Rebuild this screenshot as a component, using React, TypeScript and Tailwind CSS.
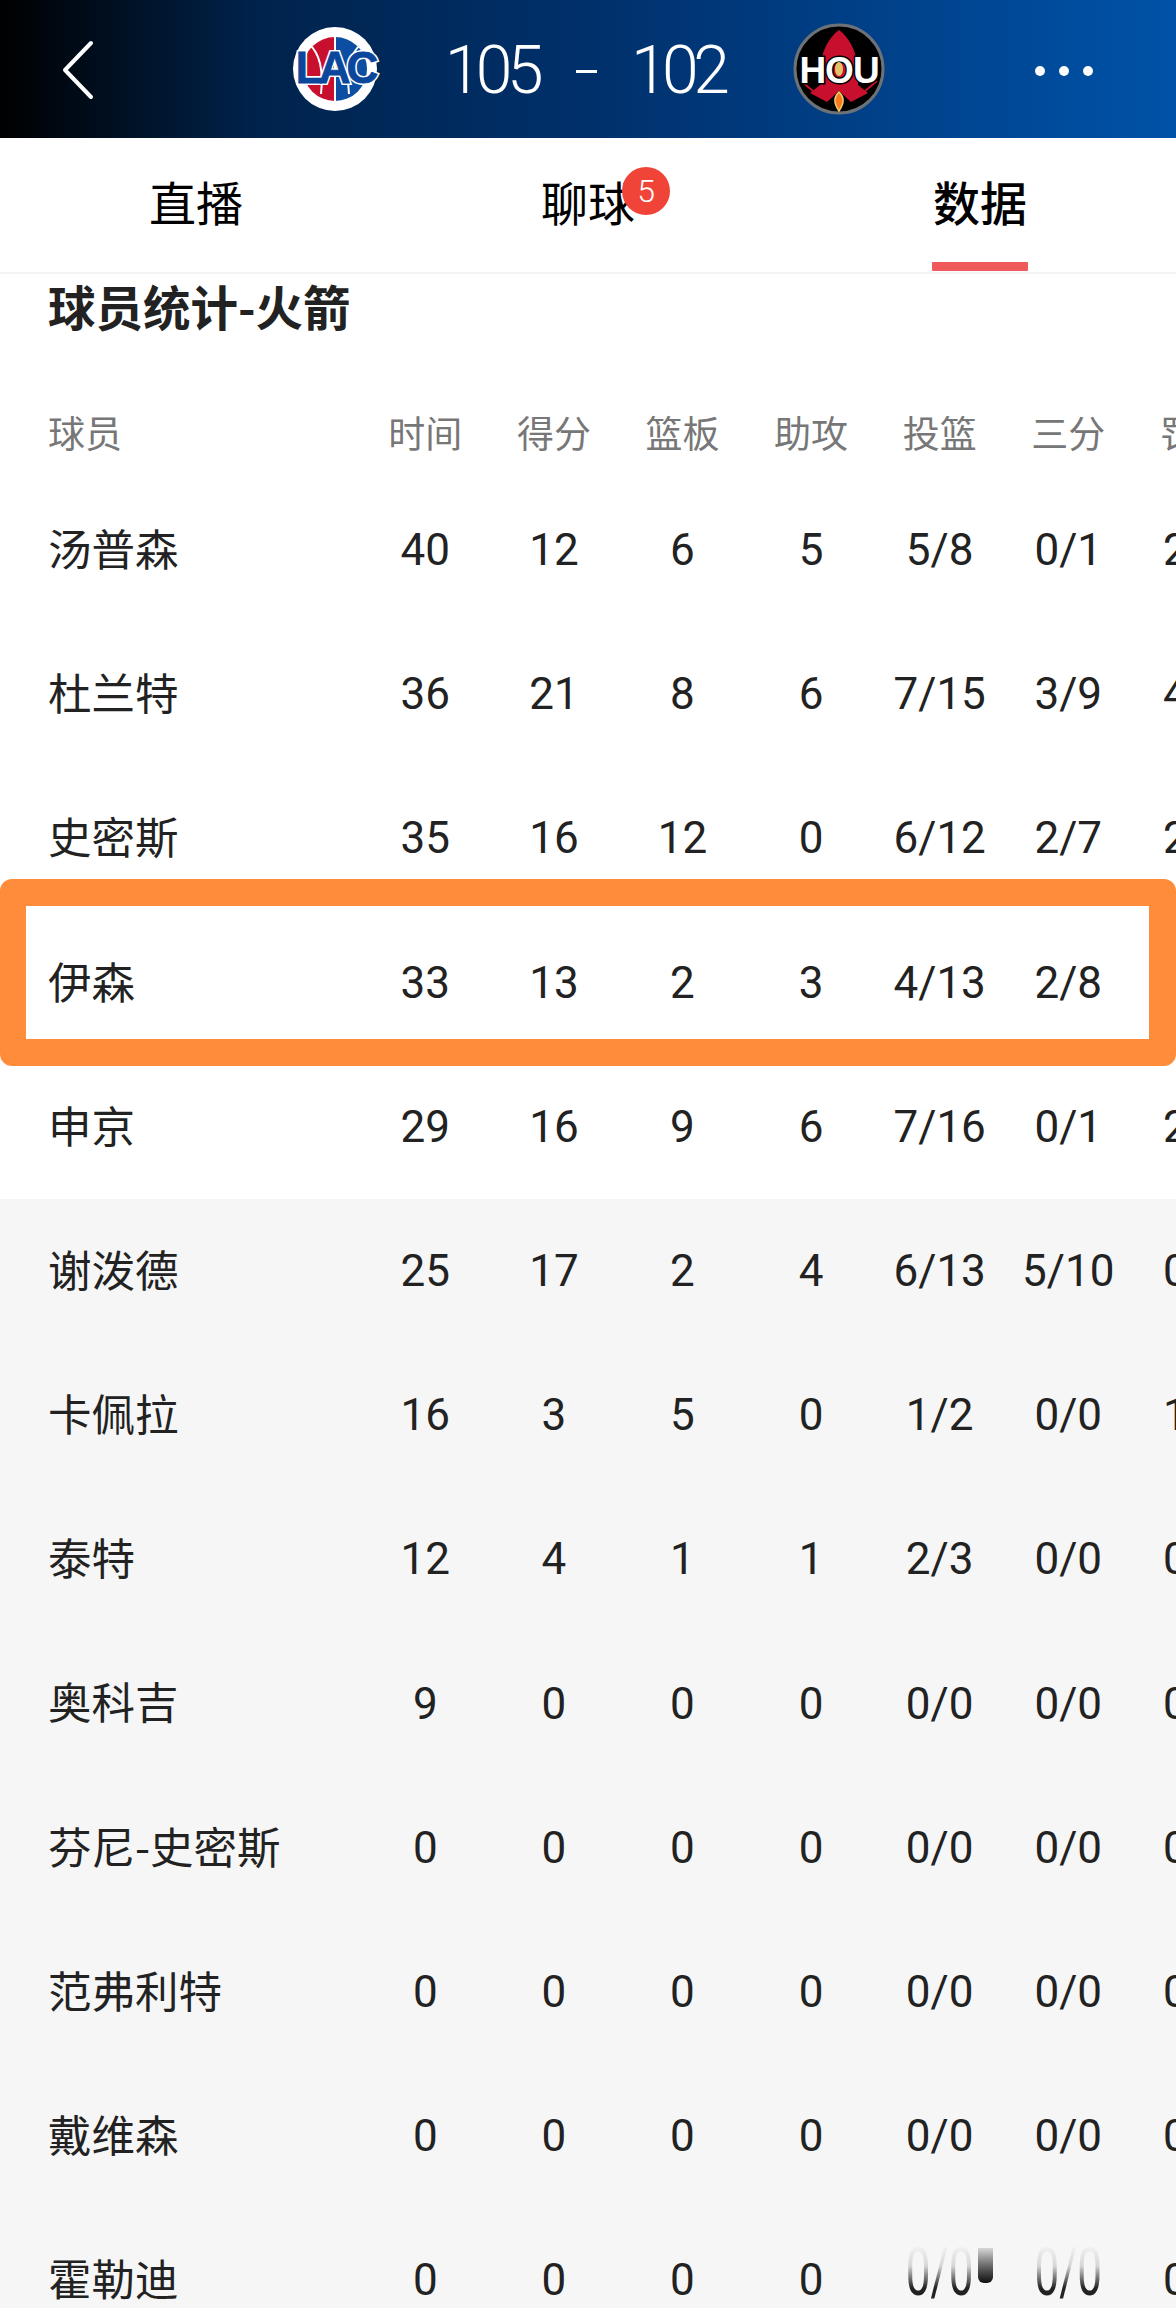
import React from 'react';

const columns = ['时间', '得分', '篮板', '助攻', '投篮', '三分', '罚球'];

const players = [
  { name: '汤普森', stats: ['40', '12', '6', '5', '5/8', '0/1', '2/2'] },
  { name: '杜兰特', stats: ['36', '21', '8', '6', '7/15', '3/9', '4/4'] },
  { name: '史密斯', stats: ['35', '16', '12', '0', '6/12', '2/7', '2/2'] },
  { name: '伊森', stats: ['33', '13', '2', '3', '4/13', '2/8', '3/4'], highlight: true },
  { name: '申京', stats: ['29', '16', '9', '6', '7/16', '0/1', '2/2'] },
  { name: '谢泼德', stats: ['25', '17', '2', '4', '6/13', '5/10', '0/0'], bench: true },
  { name: '卡佩拉', stats: ['16', '3', '5', '0', '1/2', '0/0', '1/2'], bench: true },
  { name: '泰特', stats: ['12', '4', '1', '1', '2/3', '0/0', '0/0'], bench: true },
  { name: '奥科吉', stats: ['9', '0', '0', '0', '0/0', '0/0', '0/0'], bench: true },
  { name: '芬尼-史密斯', stats: ['0', '0', '0', '0', '0/0', '0/0', '0/0'], bench: true },
  { name: '范弗利特', stats: ['0', '0', '0', '0', '0/0', '0/0', '0/0'], bench: true },
  { name: '戴维森', stats: ['0', '0', '0', '0', '0/0', '0/0', '0/0'], bench: true },
  { name: '霍勒迪', stats: ['0', '0', '0', '0', '0/0', '0/0', '0/0'], bench: true, smudged: true },
];

const LacLogo = () => (
  <svg width="90" height="90" viewBox="0 0 90 90" className="shrink-0">
    <circle cx="44" cy="45" r="42" fill="#ffffff" />
    <path d="M44 13a32 32 0 0 0 0 64z" fill="#c8102e" />
    <path d="M44 13a32 32 0 0 1 0 64z" fill="#0b4ea2" />
    <path d="M44 13v64M18 20q16 14 12 50M70 20q-16 14-12 50" stroke="#ffffff" strokeWidth="2" fill="none" />
    <text
      x="44"
      y="59"
      textAnchor="middle"
      fontFamily="'Liberation Sans', sans-serif"
      fontWeight="700"
      fontSize="44"
      letterSpacing="-4"
      fill="#ffffff"
      stroke="#ffffff"
      strokeWidth="4"
    >
      LAC
    </text>
    <text
      x="44"
      y="59"
      textAnchor="middle"
      fontFamily="'Liberation Sans', sans-serif"
      fontWeight="700"
      fontSize="44"
      letterSpacing="-4"
      fill="#0a469c"
      stroke="#0a469c"
      strokeWidth="0.8"
    >
      LAC
    </text>
  </svg>
);

const HouLogo = () => (
  <svg width="92" height="92" viewBox="0 0 92 92" className="shrink-0">
    <circle cx="46" cy="46" r="44" fill="#000000" stroke="#6d7278" strokeWidth="3" />
    <path d="M8 58 20 68M84 58 72 68" stroke="#c8102e" strokeWidth="2" />
    <path d="M46 7C35 15 28 30 27 46L27 62 17 70 34 79 46 68 58 79 75 70 65 62 65 46C64 30 57 15 46 7z" fill="#c8102e" />
    <path d="M46 69c-5 5-6 10 0 19 6-9 5-14 0-19z" fill="#f47b20" stroke="#f3c969" strokeWidth="1.5" />
    <text
      x="46"
      y="60"
      textAnchor="middle"
      fontFamily="'Liberation Sans', sans-serif"
      fontWeight="700"
      fontSize="37"
      letterSpacing="-1"
      fill="#ffffff"
      stroke="#000000"
      strokeWidth="3"
      paintOrder="stroke"
    >
      HOU
    </text>
    <ellipse cx="46" cy="46" rx="4" ry="7" fill="#e3c36a" />
  </svg>
);

export default function App() {
  return (
    <div className="w-[1176px] h-[2308px] overflow-hidden bg-white font-['Roboto','Noto_Sans_CJK_SC',sans-serif]">
      {/* Score bar */}
      <header className="relative h-[138px] flex items-center justify-center bg-[linear-gradient(90deg,#000000,#00234c_22%,#00306b_50%,#0052a8)] text-white">
        <svg width="34" height="62" viewBox="0 0 34 62" fill="none" className="absolute left-[61px] top-[39px]">
          <path d="M30 4 4 31l26 27" stroke="#ffffff" strokeWidth="4" strokeLinecap="round" strokeLinejoin="round" />
        </svg>
        <div className="flex items-center">
          <LacLogo />
          <span className="ml-[64px] pt-[3px] text-[66px] leading-none font-light tracking-[-5.5px]">105</span>
          <span className="ml-[38px] mr-[34px] mt-[4px] h-[3px] w-[21px] bg-white" />
          <span className="pt-[3px] text-[66px] leading-none font-light tracking-[-5.5px]">102</span>
          <span className="ml-[69px]">
            <HouLogo />
          </span>
        </div>
        <div className="absolute left-[1035px] top-[66px] flex gap-[14px]">
          <span className="size-[10px] rounded-full bg-white" />
          <span className="size-[10px] rounded-full bg-white" />
          <span className="size-[10px] rounded-full bg-white" />
        </div>
      </header>

      {/* Tabs */}
      <nav className="h-[136px] grid grid-cols-3 border-b-2 border-[#f3f3f3] text-[47px] text-black">
        <div className="flex items-center justify-center">直播</div>
        <div className="relative flex items-center justify-center">
          聊球
          <span className="absolute left-[230px] top-[29px] size-[48px] flex items-center justify-center rounded-full bg-[#f04438] text-[32px] font-light text-white">
            5
          </span>
        </div>
        <div className="relative flex items-center justify-center font-medium">
          数据
          <span className="absolute left-[148px] bottom-[1px] h-[9px] w-[96px] rounded-[1px] bg-[#f0595c]" />
        </div>
      </nav>

      {/* Section title */}
      <h2 className="pl-[48px] h-[64px] flex items-center text-[47.5px] font-bold text-[#222222] font-['Noto_Sans_CJK_SC',sans-serif]">
        球员统计-火箭
      </h2>

      {/* Column heads */}
      <div className="flex h-[140px] items-center overflow-hidden pl-[48px] pt-[55px] text-[37px] text-[#777777]">
        <div className="w-[313px] shrink-0">球员</div>
        {columns.map((column) => (
          <div key={column} className="w-[128.6px] shrink-0 text-center">
            {column}
          </div>
        ))}
      </div>

      {/* Players */}
      {players.map((player) => (
        <div
          key={player.name}
          className={`relative flex h-[144.2px] items-center pl-[48px] text-[44px] text-[#222222] ${player.bench ? 'bg-[#f6f6f6]' : 'bg-white'} ${player.highlight ? 'z-10' : ''}`}
        >
          <div className="w-[313px] shrink-0 mb-[5px] text-[43.5px] font-['Noto_Sans_CJK_SC',sans-serif]">{player.name}</div>
          {player.stats.map((stat, index) => (
            <div key={index} className="w-[128.6px] shrink-0 text-center whitespace-nowrap">
              {player.smudged && (index === 4 || index === 5) ? (
                <span className="inline-block origin-[50%_74%] scale-y-[1.5]">{stat}</span>
              ) : (
                stat
              )}
            </div>
          ))}
          {player.highlight && (
            <div className="absolute left-0 right-0 top-[-32px] h-[187px] rounded-[12px] border-y-[27px] border-l-[26px] border-r-[27px] border-[#ff8c3b]" />
          )}
          {player.smudged && (
            <>
              <div className="absolute left-[900px] top-[36px] h-[44px] w-[220px] bg-gradient-to-b from-[#f6f6f6] via-[#f6f6f6]/85 to-transparent" />
              <div className="absolute left-[978px] top-[40px] h-[35px] w-[15px] rounded-b-[6px] bg-gradient-to-b from-[#d8d8d8] to-[#111111]" />
            </>
          )}
        </div>
      ))}
    </div>
  );
}
